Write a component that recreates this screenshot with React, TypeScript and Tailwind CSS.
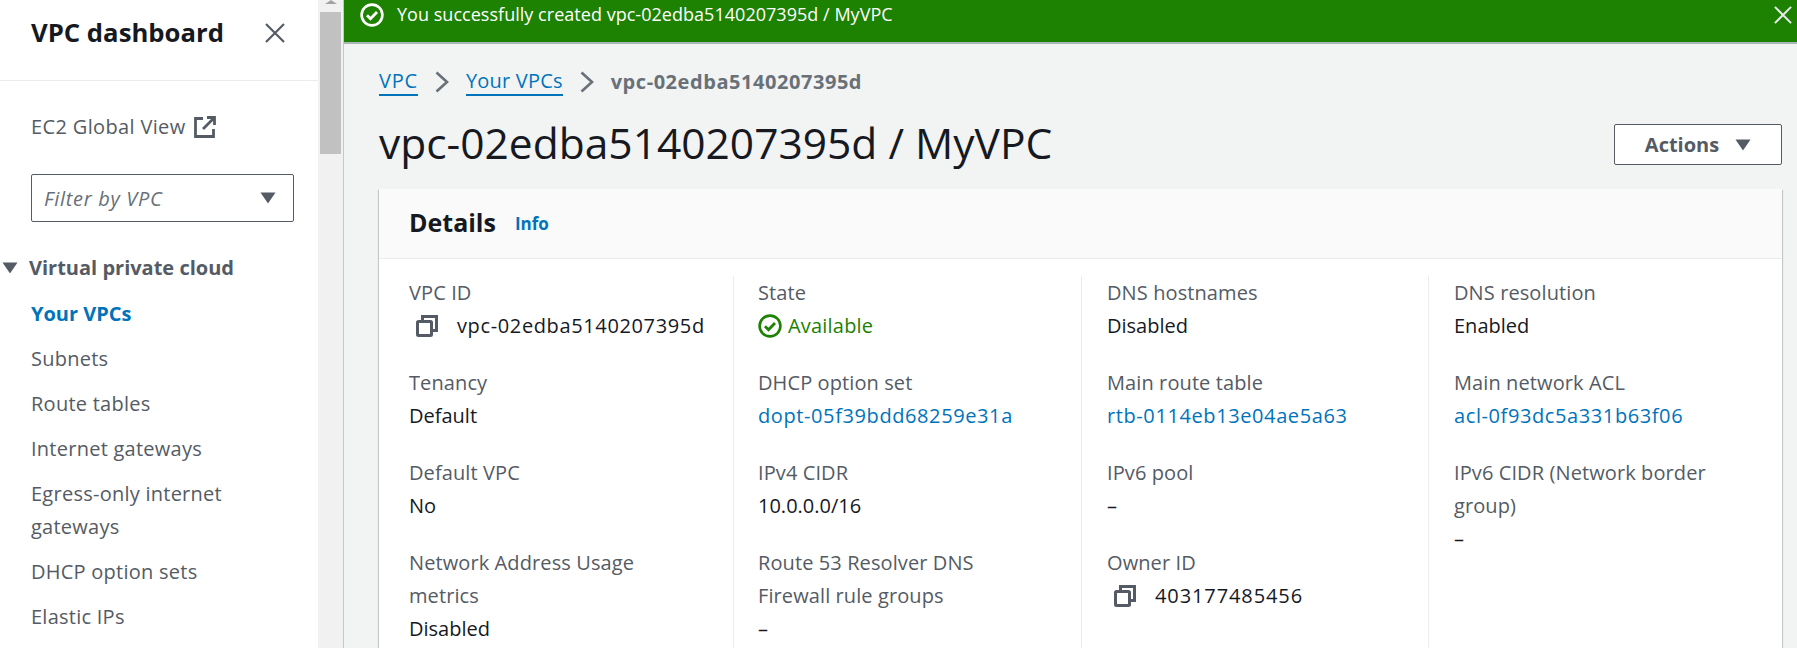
import React from "react";

const Caret = ({ className = "" }: { className?: string }) => (
  <svg viewBox="0 0 16 12" className={className} fill="#545b64">
    <path d="M0.5 0.5h15L8 11.5z" />
  </svg>
);

const Copy = () => (
  <svg viewBox="0 0 22 22" className="w-[22px] h-[22px] shrink-0" fill="none" stroke="#545b64" strokeWidth="3">
    <rect x="1.5" y="6.5" width="14" height="14" rx="1" />
    <path d="M6.5 6V1.5h14v14H16" />
  </svg>
);

const Check = ({ color, cls }: { color: string; cls: string }) => (
  <svg viewBox="0 0 24 24" className={cls} fill="none" stroke={color} strokeWidth="2.6">
    <circle cx="12" cy="12" r="10.4" />
    <path d="M7 12.2l3.5 3.5L17 9" strokeWidth="2.8" />
  </svg>
);

const Close = ({ color, cls }: { color: string; cls: string }) => (
  <svg viewBox="0 0 20 20" className={cls} fill="none" stroke={color} strokeWidth="2.2">
    <path d="M1 1l18 18M19 1L1 19" />
  </svg>
);

const Chevron = () => (
  <svg viewBox="0 0 14 22" className="w-[14px] h-[22px] mx-[17px] shrink-0" fill="none" stroke="#687078" strokeWidth="2.6">
    <path d="M1.5 1.5L12 11 1.5 20.5" />
  </svg>
);

const navItems = ["Subnets", "Route tables", "Internet gateways", "Egress-only internet gateways", "DHCP option sets", "Elastic IPs"];

type Field = { label: string; value: React.ReactNode };

const Label = ({ children }: { children: React.ReactNode }) => <div className="text-[#545b64] tracking-[0.1px]">{children}</div>;
const Link = ({ children }: { children: React.ReactNode }) => <span className="text-[#0073bb] tracking-[0.6px]">{children}</span>;

const columns: Field[][] = [
  [
    {
      label: "VPC ID",
      value: (
        <div className="flex items-center gap-[19px] pl-[7px]">
          <Copy />
          <span className="tracking-[0.63px] whitespace-nowrap">vpc-02edba5140207395d</span>
        </div>
      ),
    },
    { label: "Tenancy", value: "Default" },
    { label: "Default VPC", value: "No" },
    { label: "Network Address Usage metrics", value: "Disabled" },
  ],
  [
    {
      label: "State",
      value: (
        <div className="flex items-center gap-[6px] text-[#1d8102] tracking-[0.2px]">
          <Check color="#1d8102" cls="w-[24px] h-[24px] shrink-0" />
          <span>Available</span>
        </div>
      ),
    },
    { label: "DHCP option set", value: <Link>dopt-05f39bdd68259e31a</Link> },
    { label: "IPv4 CIDR", value: "10.0.0.0/16" },
    { label: "Route 53 Resolver DNS Firewall rule groups", value: "–" },
  ],
  [
    { label: "DNS hostnames", value: "Disabled" },
    { label: "Main route table", value: <Link>rtb-0114eb13e04ae5a63</Link> },
    { label: "IPv6 pool", value: "–" },
    {
      label: "Owner ID",
      value: (
        <div className="flex items-center gap-[19px] pl-[7px]">
          <Copy />
          <span className="tracking-[0.9px]">403177485456</span>
        </div>
      ),
    },
  ],
  [
    { label: "DNS resolution", value: "Enabled" },
    { label: "Main network ACL", value: <Link>acl-0f93dc5a331b63f06</Link> },
    { label: "IPv6 CIDR (Network border group)", value: "–" },
  ],
];

export default function App() {
  return (
    <div className="flex h-[648px] w-[1797px] overflow-hidden bg-white text-[20px] leading-[33px] text-[#16191f] font-['Open_Sans','Noto_Sans',sans-serif]">
      <aside className="w-[318px] shrink-0 bg-white">
        <div className="h-[81px] border-b border-[#eaeded] pl-[31px] pr-[32px] pt-[14px] flex items-start justify-between">
          <h2 className="text-[25.7px] leading-[38px] font-bold">VPC dashboard</h2>
          <Close color="#545b64" cls="w-[20px] h-[20px] mt-[9px] mr-[1px]" />
        </div>
        <div className="pl-[31px] pt-[29px] flex items-center gap-[8px] text-[#545b64] tracking-[0.35px]">
          <span>EC2 Global View</span>
          <svg viewBox="0 0 22 22" className="w-[22px] h-[22px]" fill="none" stroke="#545b64" strokeWidth="2.8">
            <path d="M9 2.5H1.5v18h18V13M13 1.5h7.5V9M20 2L9 13" />
          </svg>
        </div>
        <div className="ml-[31px] mt-[31px] w-[263px] h-[48px] border border-[#545b64] rounded-[2px] flex items-center justify-between pl-[12px] pr-[17px] italic text-[#687078] tracking-[0.7px]">
          <span>Filter by VPC</span>
          <Caret className="w-[16px] h-[12px]" />
        </div>
        <div className="mt-[29px] flex items-center gap-[11px] pl-[2px] font-bold text-[#545b64]">
          <Caret className="w-[16px] h-[12px]" />
          <span>Virtual private cloud</span>
        </div>
        <nav className="pl-[31px] pr-[40px] mt-[13px] flex flex-col gap-[12px] text-[#545b64] tracking-[0.25px]">
          <div className="font-bold text-[#0073bb] tracking-normal">Your VPCs</div>
          {navItems.map((n) => (
            <div key={n}>{n}</div>
          ))}
        </nav>
      </aside>

      <div className="w-[25px] shrink-0 bg-[#f1f1f1] flex flex-col items-center">
        <div className="w-0 h-0 border-x-[6px] border-x-transparent border-b-[4px] border-b-[#a3a3a3]" />
        <div className="mt-[8px] w-[21px] h-[142px] bg-[#c1c1c1]" />
      </div>

      <main className="flex-1 min-w-0 bg-[#f2f3f3] border-l border-[#c4c6c8]">
        <div className="h-[44px] bg-[#1d8102] border-b-[2px] border-[#aab7b8] flex items-start text-white text-[18px] pl-[16px] pr-[5px] tracking-[0.03px]">
          <Check color="#ffffff" cls="w-[24px] h-[24px] mt-[3px] shrink-0" />
          <span className="ml-[13px] mt-[-2px]">You successfully created vpc-02edba5140207395d / MyVPC</span>
          <Close color="#e9ebed" cls="w-[18px] h-[18px] ml-auto mt-[6px]" />
        </div>

        <div className="pl-[35px] pr-[15px]">
          <div className="mt-[21px] flex items-center h-[33px]">
            <span className="text-[#0073bb] border-b-[2px] border-[#0073bb] leading-[26px] tracking-[0.8px]">VPC</span>
            <Chevron />
            <span className="text-[#0073bb] border-b-[2px] border-[#0073bb] leading-[26px] tracking-[0.2px]">Your VPCs</span>
            <Chevron />
            <span className="font-bold text-[#687078] tracking-[0.55px]">vpc-02edba5140207395d</span>
          </div>

          <div className="mt-[20px] h-[71px] flex items-start justify-between">
            <h1 className="text-[42.5px] leading-[50px]">vpc-02edba5140207395d / MyVPC</h1>
            <button className="mt-[6px] w-[168px] h-[41px] bg-white border border-[#545b64] rounded-[2px] flex items-center justify-center gap-[16px] font-bold text-[#545b64]">
              <span>Actions</span>
              <Caret className="w-[16px] h-[12px]" />
            </button>
          </div>

          <section className="bg-white shadow-[0_1px_1px_0_rgba(0,28,36,0.3),1px_1px_1px_0_rgba(0,28,36,0.15),-1px_1px_1px_0_rgba(0,28,36,0.15)]">
            <div className="h-[70px] bg-[#fafafa] border-b border-[#eaeded] pl-[30px] flex items-center gap-[19px]">
              <h2 className="text-[25px] font-bold mt-[-3px]">Details</h2>
              <span className="text-[17px] font-bold text-[#0073bb]">Info</span>
            </div>
            <div className="grid grid-cols-[354px_348px_347px_1fr] pt-[17px] h-[400px]">
              {columns.map((col, i) => (
                <div
                  key={i}
                  className={
                    i === 0
                      ? "pl-[30px] pr-[40px] flex flex-col gap-[24px]"
                      : i === 1
                        ? "pl-[24px] pr-[40px] border-l border-[#eaeded] flex flex-col gap-[24px]"
                        : "pl-[25px] pr-[40px] border-l border-[#eaeded] flex flex-col gap-[24px]"
                  }
                >
                  {col.map((f) => (
                    <div key={f.label}>
                      <Label>{f.label}</Label>
                      <div>{f.value}</div>
                    </div>
                  ))}
                </div>
              ))}
            </div>
          </section>
        </div>
      </main>
    </div>
  );
}
